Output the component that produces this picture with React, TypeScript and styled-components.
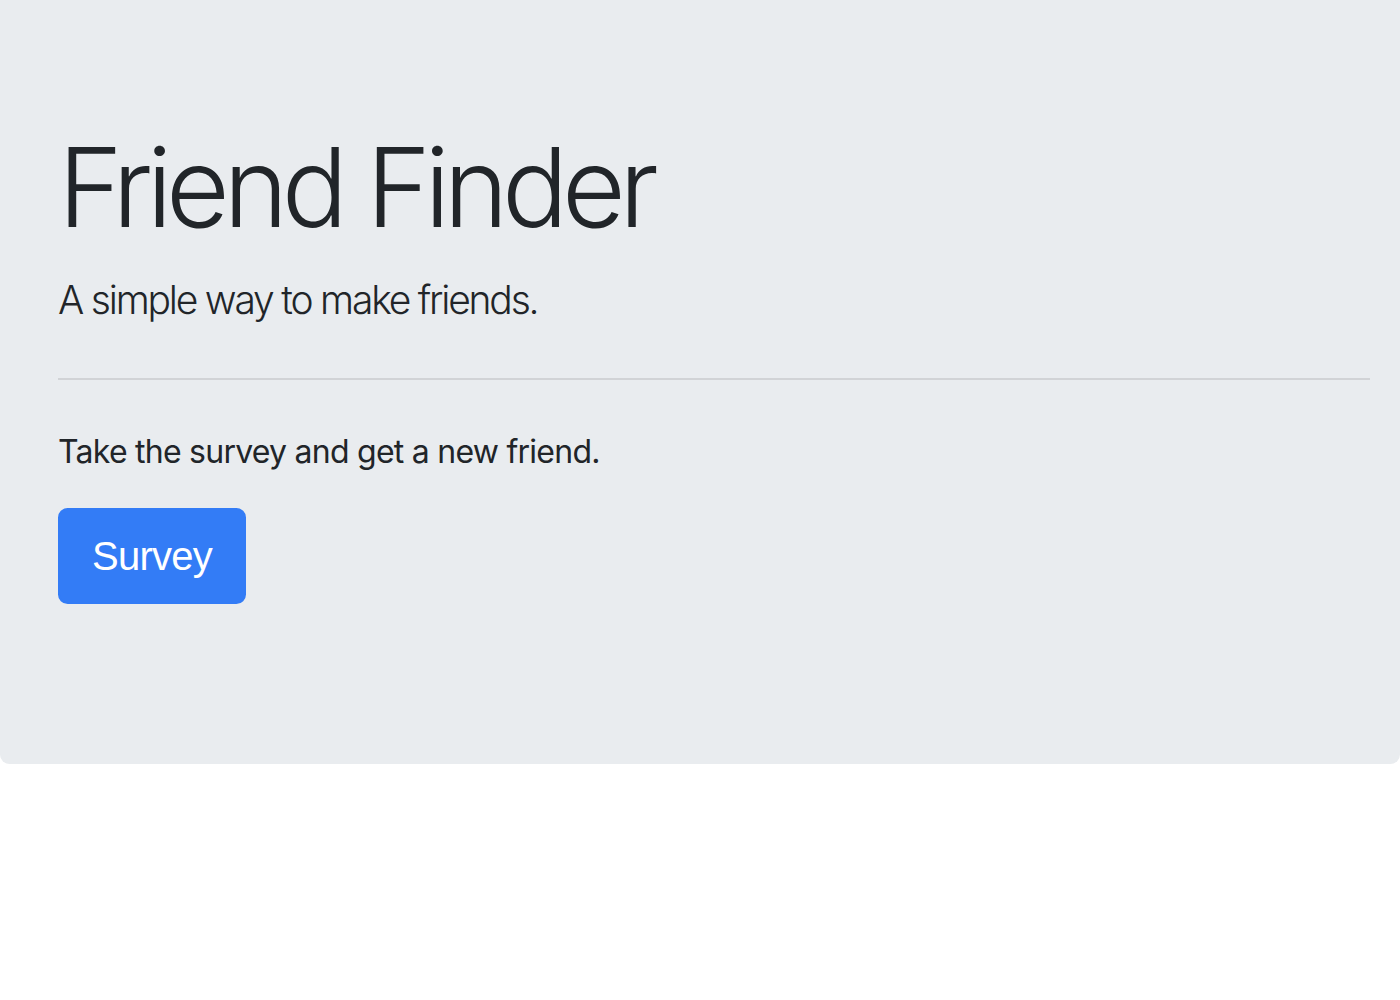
import React from "react";
import styled, { createGlobalStyle } from "styled-components";

const GlobalStyle = createGlobalStyle`
  html, body {
    margin: 0;
    padding: 0;
    background: #ffffff;
  }
  body {
    font-family: Inter, "Noto Sans", "Liberation Sans", sans-serif;
    color: #212529;
  }
  * { box-sizing: border-box; }
`;

const Jumbotron = styled.section`
  background: #e9ecef;
  padding: 120px 30px 128px 58px;
  border-radius: 0 0 9.6px 9.6px;
`;

const Title = styled.h1`
  margin: 0 0 16px 0;
  font-size: 110px;
  font-weight: 300;
  line-height: 134.4px;
  letter-spacing: -6.4px;
  color: #212529;
`;

const Lead = styled.p`
  margin: 0 0 32px 0;
  font-size: 39px;
  font-weight: 300;
  line-height: 60px;
  letter-spacing: -2.2px;
  color: #212529;
`;

const Divider = styled.hr`
  margin: 48px 0;
  border: 0;
  border-top: 2px solid #d1d3d6;
  height: 0;
`;

const Text = styled.p`
  margin: 0 0 32px 0;
  font-size: 32px;
  font-weight: 400;
  line-height: 48px;
  letter-spacing: -0.75px;
  color: #212529;
`;

const ButtonRow = styled.p`
  margin: 0 0 32px 0;
  font-size: 40px;
  line-height: 60px;
`;

const Button = styled.a`
  display: inline-block;
  vertical-align: middle;
  font-family: "Liberation Sans", Arial, sans-serif;
  font-size: 40px;
  font-weight: 400;
  line-height: 60px;
  letter-spacing: -0.75px;
  padding: 16px 32px;
  border: 2px solid #337cf6;
  border-radius: 9.6px;
  background: #337cf6;
  color: #ffffff;
  text-decoration: none;
  cursor: pointer;
`;

export default function App() {
  return (
    <>
      <GlobalStyle />
      <Jumbotron>
        <Title>Friend Finder</Title>
        <Lead>A simple way to make friends.</Lead>
        <Divider />
        <Text>Take the survey and get a new friend.</Text>
        <ButtonRow>
          <Button href="#survey">Survey</Button>
        </ButtonRow>
      </Jumbotron>
    </>
  );
}
